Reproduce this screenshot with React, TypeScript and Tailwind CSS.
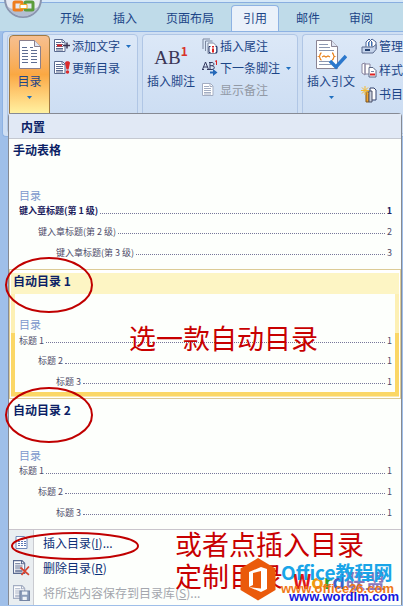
import React from "react";

const tabs = ["开始", "插入", "页面布局", "引用", "邮件", "审阅"];

const previews = [
  {
    title: "手动表格",
    rows: [
      { text: "键入章标题(第 1 级)", page: "1", bold: true },
      { text: "键入章标题(第 2 级)", page: "2" },
      { text: "键入章标题(第 3 级)", page: "3" },
    ],
  },
  {
    title: "自动目录 1",
    note: "选一款自动目录",
    circled: true,
    active: true,
    rows: [
      { text: "标题 1", page: "1" },
      { text: "标题 2", page: "1" },
      { text: "标题 3", page: "1" },
    ],
  },
  {
    title: "自动目录 2",
    circled: true,
    rows: [
      { text: "标题 1", page: "1" },
      { text: "标题 2", page: "1" },
      { text: "标题 3", page: "1" },
    ],
  },
];

const indents = ["pl-1", "pl-[23px]", "pl-[41px]"];

function Arrow() {
  return (
    <svg width="5" height="3" viewBox="0 0 5 3" className="shrink-0">
      <path d="M0 0h5L2.5 3z" fill="#1f6fc0" />
    </svg>
  );
}

function DocIcon({ size, kind }: { size: number; kind?: string }) {
  const muted = kind === "muted" || kind === "save";
  const ink = muted ? "#a3adc2" : "#5a6a90";
  return (
    <svg width={size} height={size} viewBox="0 0 16 16" className="shrink-0">
      <path d="M.5 1.5h8l2.500 2.500v9.500H.5z" fill="#fff" stroke={ink} />
      <path d="M8 1.500v3h2.500" fill="none" stroke={ink} />
      <path d="M2 4.500h5M2 6.500h7M2 8.500h7M2 10.500h7M2 12h7" stroke={ink} />
      {kind === "add" && (
        <>
          <path d="M3 7.500h5" stroke="#d22" strokeWidth="2" />
          <path d="M9 7.500h7M13 4.500v6" stroke="#3c3450" strokeWidth="1.5" />
        </>
      )}
      {kind === "update" && (
        <>
          <path d="M11 3c0-2.500 5-2.500 5 0l-1.500 6.500h-2z" fill="#dc2b2b" />
          <circle cx="13.500" cy="12" r="1.700" fill="#dc2b2b" />
        </>
      )}
      {kind === "remove" && <path d="M7 8l8 7M15 7l-7 8" stroke="#d8432f" strokeWidth="1.600" />}
      {kind === "save" && (
        <>
          <path d="M6.500 6.500h9v9h-9z" fill="#8b9cba" stroke="#7484a3" />
          <path d="M8.500 7h5v3h-5zM9 12h4v3h-4z" fill="#eef2f8" />
        </>
      )}
    </svg>
  );
}

function InsertTocIcon() {
  return (
    <svg width="13" height="13" viewBox="0 0 13 13" className="shrink-0">
      <path d="M1 .5h8.500l2.500 2.500v9.500H1z" fill="#fff" stroke="#6f86b8" />
      <path d="M3 3.500h2M6 3.500h2M3 5.500h2M6 5.500h2M9 5.500h2M3 7.500h2M6 7.500h2M9 7.500h2M3 9.500h2M6 9.500h2M9 9.500h2" stroke="#5b78b5" />
    </svg>
  );
}

function TocIcon() {
  return (
    <svg width="22" height="29" viewBox="0 0 22 29" className="shrink-0">
      <path d="M.5.5h15l6 6v22H.5z" fill="#fff" stroke="#8a7f8c" />
      <path d="M15.500.5v6h6" fill="#dfe5f2" stroke="#8a7f8c" />
      <path
        d="M3 7.500h5M3 10.500h6M3 13.500h6M3 16.500h6M3 19.500h6M3 22.500h6M11 7.500h3M12 10.500h6M12 13.500h6M12 16.500h6M12 19.500h6M12 22.500h6"
        stroke="#5d6d92"
      />
    </svg>
  );
}

function CitationIcon() {
  return (
    <svg width="31" height="31" viewBox="0 0 31 31" className="shrink-0">
      <path d="M.5 1.500h15l6 6v22H.5z" fill="#fff" stroke="#8a8494" />
      <path d="M15.500 1.500v6h6" fill="#dfe5f2" stroke="#8a8494" />
      <path d="M3 5.500h9M3 8.500h11M3 11.500h15M3 22.500h12M3 25.500h12" stroke="#8c98b2" />
      <path
        d="M5.500 14c-2 0-1 3-2.500 3.500 1.500.5.5 3.500 2.500 3.500M16 14c2 0 1 3 2.500 3.500-1.500.5-.5 3.500-2.500 3.500M6 18l2-1 2 1 2-1 2 1"
        fill="none"
        stroke="#e8821e"
        strokeWidth="1.300"
      />
      <path d="M14 22l6 6L30 17" fill="none" stroke="#2c78cc" strokeWidth="3.500" />
    </svg>
  );
}

function EndnoteIcon() {
  return (
    <svg width="16" height="16" viewBox="0 0 16 16" className="shrink-0">
      <path d="M1 11V1h7M3.500 13V3h7" fill="none" stroke="#7b879f" />
      <path d="M6 5h5.500l3 3v7.500H6z" fill="#fff" stroke="#7b879f" />
      <path d="M8.500 8.500H7v6h1.500M13.500 8.500H15v6h-1.500" fill="none" stroke="#23356b" />
      <path d="M11 8v1.500M11 10.500v4" stroke="#d22" strokeWidth="2" />
    </svg>
  );
}

function NextNoteIcon() {
  return (
    <svg width="16" height="16" viewBox="0 0 16 16" className="shrink-0">
      <path
        d="M.5 9.500L3.500 2l3 7.500M1.500 7h4M0 9.500h2M5 9.500h2M8 2.500v7M7 2.500h3c2.500 0 2.500 3.200 0 3.200H8M10 5.700c3 0 3 3.800 0 3.800H7"
        fill="none"
        stroke="#33385e"
      />
      <path d="M13 1.500l1.500-1V5" fill="none" stroke="#d22" />
      <path d="M8 11.500h3V9l4.500 3.500L11 16v-2.500H8z" fill="#2468b8" />
    </svg>
  );
}

function ManageIcon() {
  return (
    <svg width="16" height="16" viewBox="0 0 16 16" className="shrink-0">
      <path d="M5 9V4l3-3 3 3v5M8 9V4l3-3 4 3v7" fill="#fff" stroke="#4a6294" />
      <path d="M7.500 4v4M10.500 4v4" stroke="#3b72b8" />
      <path d="M1 9h11l3-2.500v5L12 15H1z" fill="#c3d2ea" stroke="#5a6b8e" />
      <path d="M4 12h5" stroke="#23406f" strokeWidth="2" />
    </svg>
  );
}

function StyleIcon() {
  return (
    <svg width="16" height="16" viewBox="0 0 16 16" className="shrink-0">
      <path d="M1 2l3-1v12l-3-2zM4 2h5v10H4z" fill="#fff" stroke="#8a86a0" />
      <path d="M8 5.500h4l3 3V15H8z" fill="#fff" stroke="#5a6785" />
      <path d="M10 9.500h3" stroke="#7a88a5" />
      <path d="M9 12.500h5" stroke="#d22" strokeWidth="2" />
    </svg>
  );
}

function BibliographyIcon() {
  return (
    <svg width="16" height="17" viewBox="0 0 16 17" className="shrink-0">
      <path d="M9 2h4l2 2v10H9z" fill="#fff" stroke="#33436e" />
      <path d="M5 6h3v10H5z" fill="#f3a62e" stroke="#7a5520" />
      <path d="M8 5h3v11H8z" fill="#c9cfdd" stroke="#4a5068" />
      <path d="M4 0v9M0 4.500h8M1 1.500l6 6M7 1.500l-6 6" stroke="#f5b92e" />
    </svg>
  );
}

function OfficeOrb() {
  return (
    <svg width="38" height="38" viewBox="0 0 38 38">
      <circle cx="19" cy="19" r="18" fill="#e6eaf3" stroke="#8a95ae" strokeWidth="2" />
      <path d="M3 26c6 6 26 6 32 0a17.500 17.500 0 0 1-32 0z" fill="#b3bed2" />
      <rect x="10" y="22" width="8" height="8" rx="1" fill="none" stroke="#ee7d1e" strokeWidth="3" />
      <rect x="21" y="22" width="8" height="8" rx="1" fill="none" stroke="#5b9c3c" strokeWidth="3" />
      <path d="M9 17h8M22 17h7" stroke="#e8501c" strokeWidth="3" />
      <path d="M16 24.500h7v4h-7z" fill="#fff" stroke="#eea41f" />
    </svg>
  );
}

function SmallButton({
  icon,
  label,
  arrow,
  disabled,
}: {
  icon: React.ReactNode;
  label: string;
  arrow?: boolean;
  disabled?: boolean;
}) {
  return (
    <button
      disabled={disabled}
      className="flex h-[22px] items-center gap-[2px] whitespace-nowrap text-[#1c4587] disabled:text-[#9299a5]"
    >
      {icon}
      <span>{label}</span>
      {arrow && (
        <span className="pl-1">
          <Arrow />
        </span>
      )}
    </button>
  );
}

function Preview({ item }: { item: (typeof previews)[number] }) {
  return (
    <div
      className={`relative h-[130px] border p-px ${item.active ? "border-[#dccb96] bg-white" : "border-transparent"}`}
    >
      <div
        className={`h-full px-1 pb-1 ${
          item.active ? "border-b border-[#fbe9ac] bg-linear-to-b from-[#fdf0b4] from-50% to-[#fbd766] to-50%" : ""
        }`}
      >
        <div className={`flex h-full flex-col ${item.active ? "bg-[#fdfffc]" : ""}`}>
          <h3
            className={`-mx-1 h-6 pl-[2px] font-bold text-[#0c1f66] ${
              item.active ? "border-t-2 border-white bg-[#fdf5c4] leading-4" : "leading-[18px]"
            }`}
          >
            {item.title}
          </h3>
          <p className="mt-5 h-4 pl-1 text-[11px] leading-5 text-[#7c98cc]">目录</p>
          {item.rows.map((row, i) => (
            <div
              key={row.text}
              className={`flex h-[21px] items-center pr-[3px] text-[9px] ${indents[i]} ${row.bold ? "font-bold text-[#20205c]" : "text-[#4c4a68]"}`}
            >
              <span className="whitespace-nowrap">{row.text}</span>
              <span className="mx-[2px] mt-1 h-px flex-1 border-t border-dotted border-[#77779a]" />
              <span>{row.page}</span>
            </div>
          ))}
        </div>
      </div>
      {item.circled && (
        <svg width="92" height="60" viewBox="0 0 92 60" className="absolute -top-[14px] -left-[6px] z-10">
          <ellipse cx="45" cy="29" rx="43" ry="27" fill="none" stroke="#c00000" strokeWidth="2" />
        </svg>
      )}
      {item.note && (
        <p className="absolute top-12 left-[119px] text-[27px] leading-10 whitespace-nowrap text-[#c80000]">{item.note}</p>
      )}
    </div>
  );
}

function Command({
  icon,
  label,
  hotkey,
  dots,
  disabled,
}: {
  icon: React.ReactNode;
  label: string;
  hotkey: string;
  dots?: boolean;
  disabled?: boolean;
}) {
  return (
    <button
      disabled={disabled}
      className="flex h-[25px] w-full items-center whitespace-nowrap text-[#0c2f77] disabled:text-[#a3a6ad]"
    >
      <span className="flex h-full w-[25px] items-center justify-center border-r border-[#c9cbd0] bg-[#e9eef1]">{icon}</span>
      <span className="pl-[9px]">
        {label}(<u>{hotkey}</u>){dots && "..."}
      </span>
    </button>
  );
}

function Watermark() {
  return (
    <div className="absolute top-7 left-[231px] flex">
      <svg width="36" height="43" viewBox="0 0 36 43" className="shrink-0">
        <path d="M18 0l17.500 10.500v21.500L18 42.500.5 32V10.500z" fill="#ea5a0b" />
        <path d="M9 14l12-5 6 2v20l-6 3-12-5 12 1.500V13l-8 2v12l-4 2z" fill="#fff" />
      </svg>
      <div className="relative ml-[5px] font-bold whitespace-nowrap">
        <p className="absolute top-[11px] left-3 text-[20px] leading-6">
          <span className="text-[#e01616]">W</span>
          <span className="text-[#f09a10]">o</span>
          <span className="text-[#2f9d2c]">r</span>
          <span className="text-[#3b62c9]">d</span>
          <span className="text-[#8a78bd]">联盟</span>
        </p>
        <p className="relative h-6 pt-1 text-[19px] leading-5 text-[#19a5e8]">Office教程网</p>
        <p className="relative h-2 font-['Liberation_Sans',sans-serif] text-[13px] leading-[14px] text-[#f07818]">www.office26.com</p>
        <p className="relative pl-2 font-['Liberation_Sans',sans-serif] text-[13px] leading-[14px] text-[#1616e0]">www.wordlm.com</p>
      </div>
    </div>
  );
}

export default function App() {
  return (
    <div className="relative min-h-screen overflow-hidden bg-[#9fbfe9] font-['Noto_Sans_CJK_SC',sans-serif] text-[12px]">
      <div className="absolute -top-5 left-1 z-10">
        <OfficeOrb />
      </div>
      <header className="bg-[#bfdbe9]">
        <div className="h-[3px] border-b border-[#89aee0] bg-[#d5e8f8]" />
        <nav className="flex h-7 items-end gap-[5px] pl-12">
          {tabs.map((tab) => (
            <button
              key={tab}
              className={`h-[26px] shrink-0 rounded-t border border-b-0 px-[11px] pb-[2px] whitespace-nowrap text-[#1c4587] ${
                tab === "引用" ? "border-[#8db2e3] bg-[#eaf1fa]" : "border-transparent"
              }`}
            >
              {tab}
            </button>
          ))}
        </nav>
      </header>

      <section className="ml-[2px] flex h-[106px] gap-1 overflow-hidden rounded-l border border-r-0 border-[#8db2e3] bg-[#cfdff3] py-[2px] pl-1">
        <div className="flex w-[131px] shrink-0 gap-1 rounded border border-[#b0c6e5] bg-linear-to-b from-[#dce8f7] to-[#c9dbf2] pl-px">
          <button className="flex h-[79px] w-[41px] shrink-0 flex-col items-center rounded-t border border-[#a07a42] bg-linear-to-b from-[#f6bf90] via-[#faa842] to-[#fff1a0] pt-1 text-[#1c4587]">
            <TocIcon />
            <span className="pt-[3px]">目录</span>
            <span className="pt-[6px]">
              <Arrow />
            </span>
          </button>
          <div>
            <SmallButton icon={<DocIcon size={16} kind="add" />} label="添加文字" arrow />
            <SmallButton icon={<DocIcon size={16} kind="update" />} label="更新目录" />
          </div>
        </div>

        <div className="flex w-[156px] shrink-0 gap-[7px] rounded border border-[#b0c6e5] bg-linear-to-b from-[#dce8f7] to-[#c9dbf2] pl-1">
          <button className="flex h-[79px] flex-col items-center pt-[6px] whitespace-nowrap text-[#1c4587]">
            <span className="flex h-[31px] font-['Liberation_Serif',serif] text-[19px] leading-[34px] text-[#3b3656]">
              AB
              <span className="font-['Noto_Sans_CJK_SC',sans-serif] text-[12px] leading-5 font-bold text-[#d8322a]">1</span>
            </span>
            <span>插入脚注</span>
          </button>
          <div>
            <SmallButton icon={<EndnoteIcon />} label="插入尾注" />
            <SmallButton icon={<NextNoteIcon />} label="下一条脚注" arrow />
            <SmallButton icon={<DocIcon size={16} kind="muted" />} label="显示备注" disabled />
          </div>
        </div>

        <div className="flex flex-1 gap-[6px] overflow-hidden rounded-l border border-r-0 border-[#b0c6e5] bg-linear-to-b from-[#dce8f7] to-[#c9dbf2] pl-1">
          <button className="flex h-[79px] shrink-0 flex-col items-center pt-1 whitespace-nowrap text-[#1c4587]">
            <CitationIcon />
            <span className="pt-[2px]">插入引文</span>
            <span className="pt-[6px]">
              <Arrow />
            </span>
          </button>
          <div className="flex flex-col gap-[2px]">
            <SmallButton icon={<ManageIcon />} label="管理" />
            <SmallButton icon={<StyleIcon />} label="样式" />
            <SmallButton icon={<BibliographyIcon />} label="书目" />
          </div>
        </div>
      </section>

      <main className="relative mr-[1px] -mt-6 ml-2 rounded-t-sm border border-b-0 border-[#868a94] bg-[#fdfffc]">
        <h2 className="h-[25px] border-b border-[#c4c8d0] bg-[#e1e9f5] pl-3 leading-[26px] font-bold text-[#0c1f66]">内置</h2>
        {previews.map((item) => (
          <Preview key={item.title} item={item} />
        ))}
        <div className="relative border-t border-[#c9c5cc]">
          <Command icon={<InsertTocIcon />} label="插入目录" hotkey="I" dots />
          <Command icon={<DocIcon size={17} kind="remove" />} label="删除目录" hotkey="R" />
          <Command icon={<DocIcon size={17} kind="save" />} label="将所选内容保存到目录库" hotkey="S" dots disabled />
          <svg width="130" height="30" viewBox="0 0 130 30" className="absolute top-px left-px">
            <ellipse cx="65" cy="15" rx="63" ry="13" fill="none" stroke="#c00000" strokeWidth="2" />
          </svg>
          <p className="absolute -top-[2px] left-[166px] text-[27px] leading-8 whitespace-nowrap text-[#c80000]">
            或者点插入目录
            <br />
            定制目录
          </p>
          <Watermark />
        </div>
      </main>
    </div>
  );
}
